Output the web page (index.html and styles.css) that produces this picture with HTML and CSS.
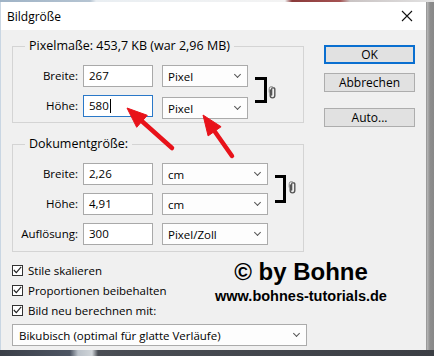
FILE: index.html
```html
<!DOCTYPE html>
<html lang="de">
<head>
<meta charset="utf-8">
<title>Bildgröße</title>
<link rel="stylesheet" href="styles.css">
</head>
<body>
<div class="screen">
  <div class="bgstrip"></div>
  <div class="main">
    <div class="dialog">
      <div class="titlebar">
        <span class="title">Bildgröße</span>
        <svg class="close" width="12" height="12" viewBox="0 0 12 12"><path d="M1 1 L11 11 M11 1 L1 11" stroke="#111" stroke-width="1.1" fill="none"/></svg>
      </div>
      <div class="body">
        <div class="top">
          <div class="groups">
            <div class="group g1">
              <span class="legend">Pixelmaße: 453,7 KB (war 2,96 MB)</span>
              <div class="linked">
                <div class="rows">
                  <div class="row">
                    <span class="lbl">Breite:</span>
                    <span class="field">267</span>
                    <span class="select s85">Pixel<i class="chev"></i></span>
                  </div>
                  <div class="row">
                    <span class="lbl">Höhe:</span>
                    <span class="field focus">580<b class="caret"></b></span>
                    <span class="select s85 shifted">Pixel<i class="chev"></i></span>
                  </div>
                </div>
                <div class="chain">
                  <span class="bracket"></span>
                  <svg class="link" width="9" height="13" viewBox="0 0 9 13"><path d="M2.2 4 V9.6 a2.3 2.3 0 0 0 4.6 0 V3.2 a1.6 1.6 0 0 0 -3.2 0 V9" fill="none" stroke="#555" stroke-width="1.4" stroke-linecap="round"/><path d="M1.2 6.5 V2.8 a2.2 2.2 0 0 1 4.4 0" fill="none" stroke="#888" stroke-width="1"/></svg>
                </div>
              </div>
            </div>
            <div class="group g2">
              <span class="legend">Dokumentgröße:</span>
              <div class="linked">
                <div class="rows">
                  <div class="row">
                    <span class="lbl">Breite:</span>
                    <span class="field">2,26</span>
                    <span class="select s105">cm<i class="chev"></i></span>
                  </div>
                  <div class="row">
                    <span class="lbl">Höhe:</span>
                    <span class="field">4,91</span>
                    <span class="select s105">cm<i class="chev"></i></span>
                  </div>
                </div>
                <div class="chain">
                  <span class="bracket"></span>
                  <svg class="link" width="9" height="13" viewBox="0 0 9 13"><path d="M2.2 4 V9.6 a2.3 2.3 0 0 0 4.6 0 V3.2 a1.6 1.6 0 0 0 -3.2 0 V9" fill="none" stroke="#555" stroke-width="1.4" stroke-linecap="round"/><path d="M1.2 6.5 V2.8 a2.2 2.2 0 0 1 4.4 0" fill="none" stroke="#888" stroke-width="1"/></svg>
                </div>
              </div>
              <div class="row">
                <span class="lbl">Auflösung:</span>
                <span class="field">300</span>
                <span class="select s105">Pixel/Zoll<i class="chev"></i></span>
              </div>
            </div>
          </div>
          <div class="buttons">
            <span class="btn ok">OK</span>
            <span class="btn">Abbrechen</span>
            <span class="btn auto">Auto...</span>
          </div>
        </div>
        <div class="opts">
          <div class="checks">
            <div class="check"><span class="box"><svg width="9" height="8" viewBox="0 0 9 8"><path d="M0.8 4 L3.3 6.6 L8.2 0.9" stroke="#222" stroke-width="1.1" fill="none"/></svg></span>Stile skalieren</div>
            <div class="check"><span class="box"><svg width="9" height="8" viewBox="0 0 9 8"><path d="M0.8 4 L3.3 6.6 L8.2 0.9" stroke="#222" stroke-width="1.1" fill="none"/></svg></span>Proportionen beibehalten</div>
            <div class="check"><span class="box"><svg width="9" height="8" viewBox="0 0 9 8"><path d="M0.8 4 L3.3 6.6 L8.2 0.9" stroke="#222" stroke-width="1.1" fill="none"/></svg></span>Bild neu berechnen mit:</div>
          </div>
          <div class="watermark">
            <span class="wm1">© by Bohne</span>
            <span class="wm2">www.bohnes-tutorials.de</span>
          </div>
        </div>
        <span class="select wide">Bikubisch (optimal für glatte Verläufe)<i class="chev"></i></span>
      </div>
    </div>
    <div class="rightedge"></div>
  </div>
  <div class="bottomstrip"></div>
  <svg class="arrows" width="434" height="356" viewBox="0 0 434 356">
    <g fill="#e8121a" stroke="#e8121a">
      <path d="M172 148 L142 121.3" stroke-width="4.5" stroke-linecap="round" fill="none"/>
      <path d="M127 108 L147.3 115.3 L136.7 127.3 Z" stroke-width="1"/>
      <path d="M232 156 L214.6 131.3" stroke-width="4.5" stroke-linecap="round" fill="none"/>
      <path d="M203 115 L221.1 126.7 L208.1 135.9 Z" stroke-width="1"/>
    </g>
  </svg>
</div>
</body>
</html>
```

FILE: styles.css
```css
* { box-sizing: border-box; }
html, body { margin: 0; padding: 0; }
body {
  width: 434px;
  height: 356px;
  overflow: hidden;
  font-family: "Open Sans", "Noto Sans", sans-serif;
  font-size: 11px;
  color: #000;
  background: #7f8a95;
}
.screen {
  position: relative;
  width: 434px;
  height: 356px;
  display: flex;
  flex-direction: column;
}
.bgstrip {
  height: 2px;
  flex-shrink: 0;
  background: linear-gradient(to right, #9fb3c6 0, #b5c4d2 90px, #e9eef2 96px, #f3f3f3 285px, #8a3a3a 292px, #a55252 340px, #c9c3c3 350px, #e3e3e3 434px);
}
.main {
  display: flex;
  height: 348px;
  flex-shrink: 0;
}
.dialog {
  width: 427px;
  background: #f0f0f0;
  border-left: 1px solid #c9d6e3;
  border-right: 1px solid #9a9a9a;
  display: flex;
  flex-direction: column;
}
.rightedge {
  width: 7px;
  background: linear-gradient(to right, #b8b8b8, #8d8d8d 3px, #888 7px);
}
.bottomstrip {
  height: 6px;
  flex-shrink: 0;
  background: linear-gradient(to right, #3a3f48 0, #4d5563 70px, #b9c0c8 78px, #cfd4d8 92px, #4a4e55 98px, #3b3e44 434px);
}
.titlebar {
  height: 28px;
  flex-shrink: 0;
  background: #fff;
  display: flex;
  align-items: center;
  justify-content: space-between;
  padding: 0 13px 0 6px;
}
.title { font-size: 12px; }
.close { display: block; }
.body {
  flex: 1;
  min-height: 0;
  padding: 0 0 0 11px;
  display: flex;
  flex-direction: column;
}
.top { display: flex; }
.groups { width: 292px; }
.group {
  border: 1px solid #d4d4d4;
  width: 292px;
}
.g1 { margin-top: 16px; padding-bottom: 5px; }
.g2 { margin-top: 21px; padding-bottom: 6px; }
.legend {
  display: block;
  width: max-content;
  margin: -9px 0 0 12px;
  padding: 0 4px;
  line-height: 16px;
  height: 16px;
  font-size: 12.5px;
  background: #f0f0f0;
}
.linked {
  display: flex;
  margin-top: 11px;
}
.rows { display: flex; flex-direction: column; gap: 8px; }
.g2 .linked + .row { margin-top: 8px; }
.row {
  display: flex;
  align-items: flex-start;
  height: 22px;
}
.lbl {
  width: 65px;
  text-align: right;
  line-height: 22px;
  margin-right: 5px;
  font-size: 11.5px;
}
.field {
  width: 70px;
  height: 22px;
  background: #fff;
  border: 1px solid #a9a9a9;
  padding-left: 5px;
  line-height: 20px;
  font-size: 11.5px;
  display: flex;
  align-items: center;
}
.field.focus { border-color: #2a78c8; }
.caret {
  display: inline-block;
  width: 1px;
  height: 14px;
  background: #000;
  margin-left: 1px;
}
.select {
  margin-left: 9px;
  height: 22px;
  background: #fdfdfd;
  border: 1px solid #ababab;
  padding-left: 5px;
  line-height: 21px;
  font-size: 11.5px;
  display: flex;
  align-items: center;
}
.s85 { width: 86px; }
.s105 { width: 106px; }
.shifted { margin-top: 2px; }
.chev {
  margin-left: auto;
  margin-right: 7px;
  width: 5px;
  height: 5px;
  border-right: 1px solid #555;
  border-bottom: 1px solid #555;
  transform: rotate(45deg);
  margin-top: -3px;
}
.chain {
  display: flex;
  align-items: flex-start;
  margin-left: 7px;
}
.bracket {
  width: 12px;
  height: 26px;
  margin-top: 12px;
  border: 3px solid #000;
  border-left: none;
}
.link { margin-left: 1px; margin-top: 21px; display: block; }
.g2 .chain { margin-left: 7px; }
.g2 .bracket { width: 11px; height: 28px; }
.g2 .link { margin-left: 2px; margin-top: 18px; }
.buttons {
  display: flex;
  flex-direction: column;
  margin-left: 20px;
  margin-top: 15px;
  width: 91px;
}
.btn {
  height: 19px;
  background: #e1e1e1;
  border: 1px solid #adadad;
  text-align: center;
  line-height: 17px;
  font-size: 12px;
  margin-bottom: 9px;
}
.btn.ok { border: 2px solid #0a6fd0; line-height: 15px; }
.btn.auto { margin-top: 7px; }
.opts {
  display: flex;
  margin-top: 8px;
}
.checks { width: 189px; display: flex; flex-direction: column; }
.check {
  height: 20px;
  display: flex;
  align-items: center;
  font-size: 11.5px;
}
.box {
  width: 11px;
  height: 11px;
  border: 1px solid #333;
  background: #fff;
  margin-right: 5px;
  display: flex;
  align-items: center;
  justify-content: center;
}
.box svg { display: block; }
.watermark {
  width: 200px;
  display: flex;
  flex-direction: column;
  align-items: center;
  margin-top: -1px;
  font-family: "Liberation Sans", Arial, sans-serif;
  font-weight: bold;
  color: #000;
}
.wm1 { font-size: 24px; line-height: 26px; }
.wm2 { font-size: 14.5px; line-height: 18px; margin-top: 2px; }
.select.wide {
  margin-left: 0;
  margin-top: 4px;
  width: 295px;
  padding-left: 6px;
}
.arrows {
  position: absolute;
  left: 0;
  top: 0;
  pointer-events: none;
}
```
